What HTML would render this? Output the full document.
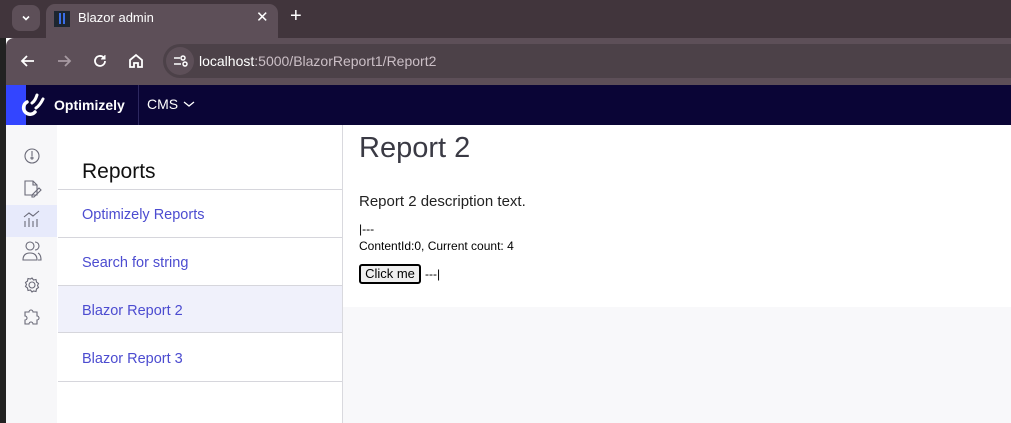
<!DOCTYPE html>
<html><head><meta charset="utf-8"><style>
*{box-sizing:border-box;margin:0;padding:0}
body{width:1011px;height:423px;overflow:hidden;font-family:"Liberation Sans",sans-serif;background:#fff;position:relative}
.abs{position:absolute}
</style></head><body>
<div class="abs" style="left:0;top:0;width:1011px;height:38px;background:#41353c"></div>
<div class="abs" style="left:12px;top:5px;width:28px;height:26px;border-radius:8px;background:#5d4f58"></div>
<svg class="abs" style="left:20px;top:12px" width="12" height="12"><path d="M3 4.5l3 3 3-3" stroke="#fff" stroke-width="1.6" fill="none"/></svg>
<div class="abs" style="left:46px;top:4px;width:232px;height:40px;border-radius:9px 9px 0 0;background:#5d4f58"></div>
<div class="abs" style="left:54px;top:11px;width:16px;height:16px;background:#1d2630"></div>
<div class="abs" style="left:59px;top:13px;width:2px;height:11px;background:#3a6ee8"></div>
<div class="abs" style="left:63px;top:13px;width:2px;height:11px;background:#3a6ee8"></div>
<div class="abs" style="left:78px;top:10px;color:#fff;font-size:13px">Blazor admin</div>
<div class="abs" style="left:256px;top:8px;color:#fff;font-size:15px">✕</div>
<div class="abs" style="left:290px;top:5px;color:#fff;font-size:20px">+</div>
<div class="abs" style="left:6px;top:38px;width:1005px;height:47px;background:#5d4f58;border-radius:8px 0 0 0"></div>
<div class="abs" style="left:0;top:38px;width:6px;height:385px;background:#222"></div>
<svg class="abs" style="left:18px;top:51px" width="20" height="20"><path d="M16 10H4M9 5l-5 5 5 5" stroke="#fff" stroke-width="1.8" fill="none"/></svg>
<svg class="abs" style="left:54px;top:51px" width="20" height="20"><path d="M4 10h12M11 5l5 5-5 5" stroke="#a79aa2" stroke-width="1.8" fill="none"/></svg>
<svg class="abs" style="left:90px;top:51px" width="20" height="20"><path d="M15 10a5 5 0 1 1-1.5-3.6" stroke="#fff" stroke-width="1.8" fill="none"/><path d="M15 4v4h-4" fill="#fff" stroke="#fff" stroke-width="1"/></svg>
<svg class="abs" style="left:126px;top:51px" width="20" height="20"><path d="M4 9l6-5 6 5v7h-4v-4h-4v4H4z" stroke="#fff" stroke-width="1.8" fill="none"/></svg>
<div class="abs" style="left:163px;top:44px;width:848px;height:34px;border-radius:17px 0 0 17px;background:#4c4148"></div>
<div class="abs" style="left:166px;top:47px;width:28px;height:28px;border-radius:14px;background:#5d4f58"></div>
<svg class="abs" style="left:172px;top:53px" width="16" height="16"><path d="M2 5h6M2 11h7" stroke="#fff" stroke-width="1.6"/><circle cx="11" cy="5" r="2" stroke="#fff" stroke-width="1.5" fill="none"/><circle cx="13" cy="11" r="2" stroke="#fff" stroke-width="1.5" fill="none"/></svg>
<div class="abs" style="left:199px;top:53px;font-size:14px;color:#fff">localhost<span style="color:#cbbfc6">:5000/BlazorReport1/Report2</span></div>
<div class="abs" style="left:6px;top:85px;width:1005px;height:40px;background:#0a0536"></div>
<div class="abs" style="left:6px;top:85px;width:20px;height:40px;background:#3345ff"></div>
<svg class="abs" style="left:14px;top:88px" width="34" height="34"><path d="M13 14a6.5 6.5 0 1 0 8 10" stroke="#fff" stroke-width="3.5" fill="none" stroke-linecap="round"/><path d="M18 15c3-2 4-5 5-8M22 20c3-2 5-5 7-9" stroke="#fff" stroke-width="3" fill="none" stroke-linecap="round"/></svg>
<div class="abs" style="left:54px;top:97px;color:#fff;font-weight:bold;font-size:14px">Optimizely</div>
<div class="abs" style="left:138px;top:85px;width:1px;height:40px;background:#2d2860"></div>
<div class="abs" style="left:147px;top:96px;color:#fff;font-size:14px">CMS</div>
<svg class="abs" style="left:183px;top:99px" width="12" height="10"><path d="M1 3l5 4 5-4" stroke="#fff" stroke-width="1.3" fill="none"/></svg>
<div class="abs" style="left:6px;top:125px;width:51px;height:298px;background:#f7f7f9"></div>
<div class="abs" style="left:6px;top:205px;width:51px;height:32px;background:#e7eafb"></div>
<svg class="abs" style="left:20px;top:145px" width="24" height="190" fill="none" stroke="#6a6a78" stroke-width="1.1">
<circle cx="12" cy="11" r="7"/><path d="M12 6v5"/><circle cx="12" cy="13" r="1"/>
<path d="M5 36h8l4 4v10H5zM13 36v4h4M12 50l7-7 2 2-7 7h-2z"/>
<path d="M5 82v-6M9 82v-9M13 82v-6M17 82v-8M4 72l5-4 4 3 6-5"/>
<circle cx="10" cy="101" r="4"/><path d="M3 115c0-5 3-7 7-7s7 2 7 7zM15 97a4 4 0 0 1 0 8M18 108c2 1 3 3 3 7h-3"/>
<circle cx="12" cy="140" r="3"/><path d="M12 133l1.5 2 2.5-.5 .5 2.5 2 1.5-1 2 1 2-2 1.5-.5 2.5-2.5-.5L12 147l-1.5-2-2.5.5-.5-2.5-2-1.5 1-2-1-2 2-1.5.5-2.5 2.5.5z"/>
<path d="M5 167h4a2 2 0 1 1 4 0h4v4a2 2 0 1 1 0 4v4h-4a2 2 0 1 0-4 0H5v-4a2 2 0 1 0 0-4z"/>
</svg>
<div class="abs" style="left:57px;top:125px;width:286px;height:298px;background:#fff;border-right:1px solid #d9d9de"></div>
<div class="abs" style="left:82px;top:160px;font-size:21px;color:#111">Reports</div>
<div class="abs" style="left:58px;top:189px;width:284px;height:1px;background:#d6d6dc"></div>
<div class="abs" style="left:58px;top:237px;width:284px;height:1px;background:#d6d6dc"></div>
<div class="abs" style="left:58px;top:285px;width:284px;height:48px;background:#f0f1fb;border-top:1px solid #d6d6dc;border-bottom:1px solid #d6d6dc"></div>
<div class="abs" style="left:58px;top:381px;width:284px;height:1px;background:#d6d6dc"></div>
<div class="abs" style="left:82px;top:207px;font-size:14.5px;color:#4c4cd0">Optimizely Reports</div>
<div class="abs" style="left:82px;top:255px;font-size:14.5px;color:#4c4cd0">Search for string</div>
<div class="abs" style="left:82px;top:303px;font-size:14.5px;color:#4c4cd0">Blazor Report 2</div>
<div class="abs" style="left:82px;top:351px;font-size:14.5px;color:#4c4cd0">Blazor Report 3</div>
<div class="abs" style="left:343px;top:307px;width:668px;height:116px;background:#f8f8fa"></div>
<div class="abs" style="left:359px;top:132px;font-size:29px;font-weight:300;color:#3a3a44">Report 2</div>
<div class="abs" style="left:359px;top:193px;font-size:15px;color:#222">Report 2 description text.</div>
<div class="abs" style="left:359px;top:222px;font-size:12px;color:#000">|---</div>
<div class="abs" style="left:359px;top:239px;font-size:12px;color:#000">ContentId:0, Current count: 4</div>
<div class="abs" style="left:359px;top:264px;width:62px;height:20px;border:2px solid #000;border-radius:3px;background:#efefef;font-size:13px;text-align:center;line-height:16px">Click me</div>
<div class="abs" style="left:425px;top:267px;font-size:12px">---|</div>
</body></html>
